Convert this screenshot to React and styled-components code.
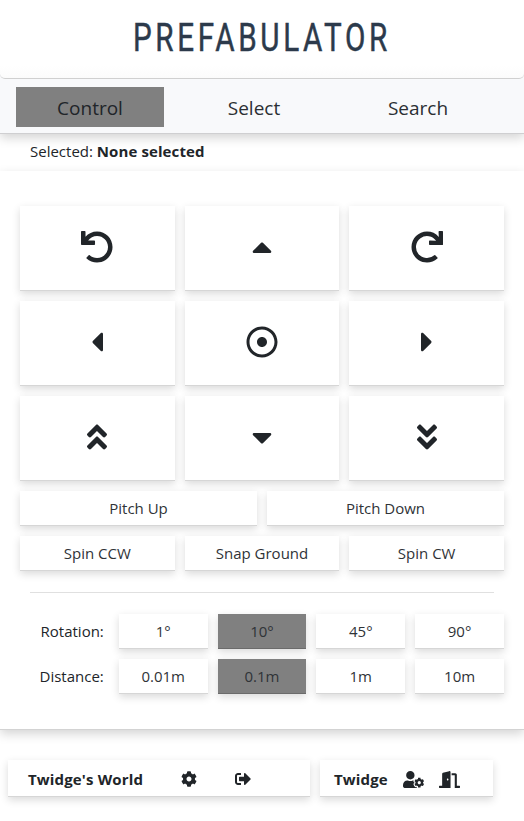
import React from 'react';
import styled, { createGlobalStyle, css } from 'styled-components';
import {
  FaUndo, FaRedo, FaCaretUp, FaCaretDown, FaCaretLeft, FaCaretRight,
  FaRegDotCircle, FaAngleDoubleUp, FaAngleDoubleDown, FaCog, FaSignOutAlt,
  FaUserCog, FaDoorOpen,
} from 'react-icons/fa';

const GlobalStyle = createGlobalStyle`
  *, *::before, *::after { box-sizing: border-box; }
  body {
    margin: 0;
    background: #fff;
    color: #212529;
    font: 400 15px/24px "Open Sans", "Noto Sans", sans-serif;
  }
  b { font-weight: 700; letter-spacing: 0.1px; }
  svg { display: block; }
`;

const raised = css`
  background: ${(p) => (p.$active ? '#808080' : '#fff')};
  border: 0;
  border-bottom: 1px solid rgba(0, 0, 0, 0.16);
  box-shadow: 0 3px 8px rgba(0, 0, 0, 0.15);
`;

const Page = styled.div`
  width: 524px;
  height: 821px;
  display: flex;
  flex-direction: column;
  overflow: hidden;
`;

const Top = styled.div`
  background: #f8f9fb;
  border-bottom: 1px solid #cfcfd1;
  box-shadow: 0 4px 10px rgba(0, 0, 0, 0.17);
`;

const Header = styled.header`
  height: 79px;
  display: flex;
  justify-content: center;
  background: linear-gradient(#fff 66px, #fbfbfb);
  border-bottom: 1px solid #d0d0d0;
  border-radius: 0 0 5px 5px;
`;

const Title = styled.h1`
  margin: 0;
  color: #2c3a4b;
  font: 400 39.5px/76px Roboto, sans-serif;
  letter-spacing: 4.85px;
  white-space: nowrap;
  -webkit-text-stroke: 0.5px #2c3a4b;
  transform: scaleX(0.75);
`;

const Nav = styled.nav`
  height: 54px;
  padding: 8px 32px 6px 16px;
  display: grid;
  grid-template-columns: repeat(3, 148px);
  gap: 16px;
`;

const Tab = styled.button`
  border: 0;
  padding: 0;
  height: 40px;
  background: ${(p) => (p.$active ? '#808080' : 'transparent')};
  color: ${(p) => (p.$active ? '#212529' : '#2b2f33')};
  font: 400 19px/42px "Open Sans", sans-serif;
`;

const Status = styled.div`
  height: 37px;
  padding: 5px 30px;
`;

const Panel = styled.main`
  height: 559px;
  padding: 35px 20px 0;
  background: #fff;
  border-bottom: 1px solid #d3d3d3;
  box-shadow: 0 4px 10px rgba(0, 0, 0, 0.17);
`;

const Pad = styled.div`
  display: grid;
  grid-template-columns: repeat(6, minmax(0, 1fr));
  gap: 10px;
`;

const Key = styled.button`
  ${raised}
  grid-column: span ${(p) => p.$span || 1};
  height: ${(p) => (p.$tall ? 85 : 35)}px;
  padding: 0 0 ${(p) => (p.$tall ? 2 : 0)}px;
  display: flex;
  align-items: center;
  justify-content: center;
  color: ${(p) => (p.$tall ? '#212529' : '#2f3337')};
  font: 400 15px/24px "Open Sans", sans-serif;
  svg { width: auto; height: 32px; }
`;

const Rule = styled.hr`
  height: 1px;
  border: 0;
  margin: 21px 10px;
  background: #e0e0e0;
`;

const Steps = styled.div`
  display: grid;
  grid-template-columns: repeat(5, minmax(0, 1fr));
  gap: 10px;
`;

const StepLabel = styled.div`
  padding-right: 5px;
  line-height: 35px;
  text-align: right;
`;

const Footer = styled.footer`
  display: flex;
  gap: 10px;
  padding: 30px 8px 0;
`;

const Card = styled.section`
  ${raised}
  width: ${(p) => p.$width}px;
  height: 37px;
  padding-left: ${(p) => p.$inset}px;
  display: flex;
  align-items: center;
  font-weight: 700;
`;

const CardName = styled.span`
  flex: 0 0 ${(p) => p.$width}px;
  padding-top: 1px;
  letter-spacing: 0.15px;
`;

const CardIcon = styled.span`
  flex: 0 0 ${(p) => p.$width}px;
  padding-top: 2px;
  svg { height: ${(p) => (p.$size > 16 ? 17 : 16)}px; width: ${(p) => p.$size}px; }
`;

const MOVES = [
  FaUndo, FaCaretUp, FaRedo,
  FaCaretLeft, FaRegDotCircle, FaCaretRight,
  FaAngleDoubleUp, FaCaretDown, FaAngleDoubleDown,
];

const STEPS = [
  { label: 'Rotation:', options: ['1°', '10°', '45°', '90°'] },
  { label: 'Distance:', options: ['0.01m', '0.1m', '1m', '10m'] },
];

export default function App() {
  return (
    <Page>
      <GlobalStyle />
      <Top>
        <Header><Title>PREFABULATOR</Title></Header>
        <Nav>
          <Tab $active>Control</Tab>
          <Tab>Select</Tab>
          <Tab>Search</Tab>
        </Nav>
      </Top>
      <Status>Selected: <b>None selected</b></Status>
      <Panel>
        <Pad>
          {MOVES.map((Icon, i) => <Key key={i} $span={2} $tall><Icon /></Key>)}
          <Key $span={3}>Pitch Up</Key>
          <Key $span={3}>Pitch Down</Key>
          <Key $span={2}>Spin CCW</Key>
          <Key $span={2}>Snap Ground</Key>
          <Key $span={2}>Spin CW</Key>
        </Pad>
        <Rule />
        <Steps>
          {STEPS.map(({ label, options }) => (
            <React.Fragment key={label}>
              <StepLabel>{label}</StepLabel>
              {options.map((o, i) => <Key key={o} $active={i === 1}>{o}</Key>)}
            </React.Fragment>
          ))}
        </Steps>
      </Panel>
      <Footer>
        <Card $width={302} $inset={20}>
          <CardName $width={153}>Twidge's World</CardName>
          <CardIcon $width={54} $size={16}><FaCog /></CardIcon>
          <CardIcon $width={20} $size={16}><FaSignOutAlt /></CardIcon>
        </Card>
        <Card $width={173} $inset={14}>
          <CardName $width={69}>Twidge</CardName>
          <CardIcon $width={36} $size={21}><FaUserCog /></CardIcon>
          <CardIcon $width={22} $size={21}><FaDoorOpen /></CardIcon>
        </Card>
      </Footer>
    </Page>
  );
}
